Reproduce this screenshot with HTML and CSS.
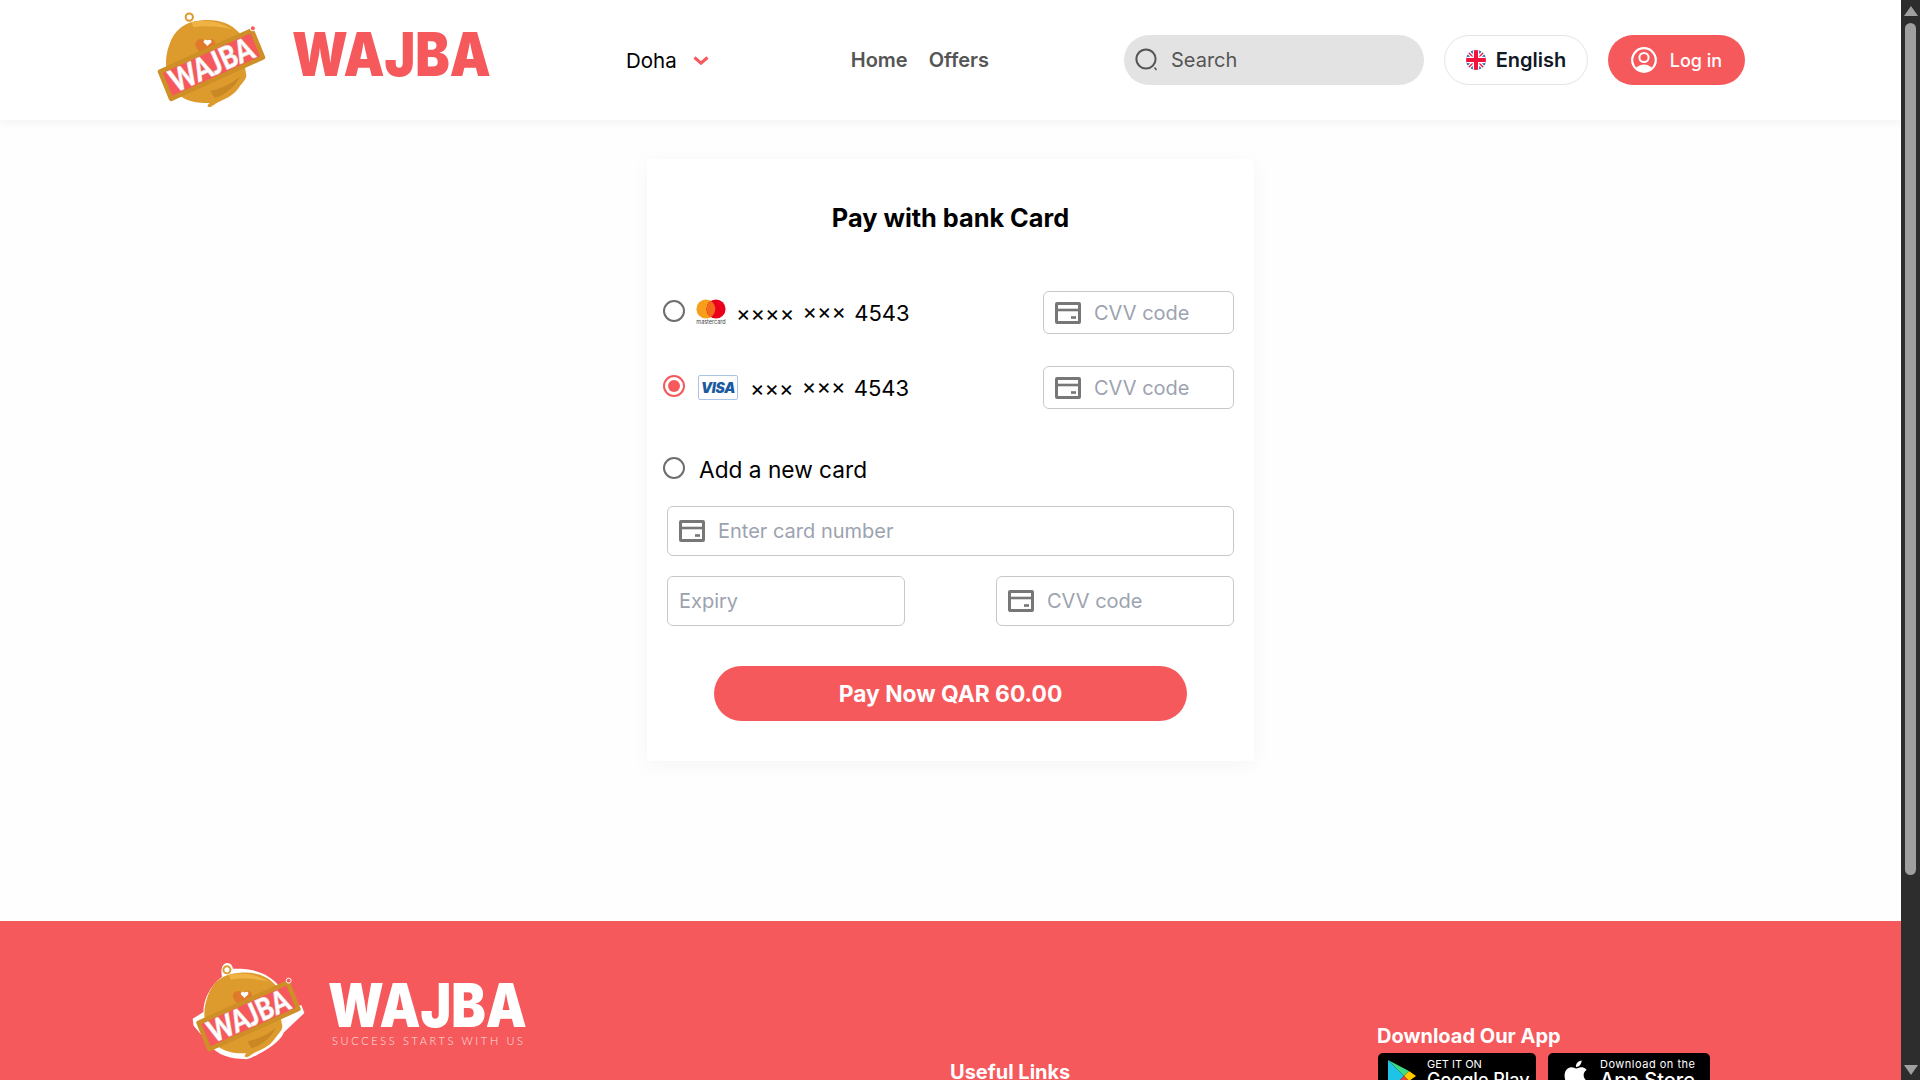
FILE: index.html
```html
<!DOCTYPE html>
<html lang="en">

<head>
    <meta charset="UTF-8">
    <meta name="viewport" content="width=device-width, initial-scale=1.0">
    <title>Wajba - Pay with bank Card</title>
    <link rel="stylesheet" href="styles.css">
</head>

<body>
    <svg class="defs" width="0" height="0">
        <symbol id="card_icon" viewBox="0 0 26 22">
            <rect x="1.5" y="1.5" width="23" height="19" rx="0.5" fill="none" stroke="#777" stroke-width="3" />
            <path d="M1 8h24" stroke="#777" stroke-width="2.6" />
            <path d="M16 15.5h5" stroke="#777" stroke-width="2.6" />
        </symbol>
        <symbol id="logo_mark" viewBox="0 0 108 95">
            <circle cx="32" cy="5" r="3.6" fill="none" stroke="#dd9a2d" stroke-width="2" />
            <path d="M12 33C17 17 28 9 45 8c15-1 27 2 37 13 3 3 4 6 1 7L88 60c2 6-2 8-7 15-4 6-10 10-20 14-4 2-8 6-10 5-2-1 0-3 1-4-14 1-28-3-34-12L10 60C8 50 9 42 12 33Z" fill="#dd9a2d" />
            <path d="M34 10C47 7 62 9 74 17 62 14 48 13 36 15Z" fill="#eeb245" />
            <path d="M53 78C63 76 72 72 82 64 78 73 68 82 57 85Z" fill="#c98824" />
            <path d="M38 31c2-6 8-5 10-2 3-4 10-3 10 3 0 5-6 8-10 12-4-3-10-7-10-13Z" fill="#e07a2a" />
            <path d="M46 29c1-2 3-2 4-1 1-1 4-1 4 1 0 2-3 3-4 5-1-2-4-3-4-5Z" fill="#fff" />
            <path d="M3 59 94 18 105 45 14 86Z" fill="#f6595c" stroke="#cf8f27" stroke-width="4.5" stroke-linejoin="round" />
            <circle cx="95" cy="16" r="2.5" fill="#f6595c" stroke="#fff" stroke-width="1" />
            <text x="54" y="63" transform="rotate(-24 54 52)" text-anchor="middle" textLength="88" lengthAdjust="spacingAndGlyphs" class="logo_word">WAJBA</text>
        </symbol>
    </svg>

    <div class="page">
        <div class="content">
            <header class="topbar">
                <a class="brand">
                    <svg class="brand_mark" viewBox="0 0 108 95"><use href="#logo_mark" /></svg>
                    <span class="brand_name">WAJBA</span>
                </a>
                <div class="city">
                    <span>Doha</span>
                    <svg width="16" height="9" viewBox="0 0 16 9">
                        <path d="M1.5 1.5 8 7.2l6.5-5.7" fill="none" stroke="#f6595c" stroke-width="3" />
                    </svg>
                </div>
                <nav class="nav">
                    <a>Home</a>
                    <a>Offers</a>
                </nav>
                <div class="search">
                    <svg width="24" height="24" viewBox="0 0 24 24">
                        <circle cx="11" cy="11" r="9.6" fill="none" stroke="#555" stroke-width="2" />
                        <path d="M19.5 19.5 21.5 22" stroke="#555" stroke-width="1.5" />
                    </svg>
                    <input type="text" placeholder="Search">
                </div>
                <div class="lang">
                    <svg width="20" height="20" viewBox="0 0 20 20">
                        <clipPath id="flag_clip"><circle cx="10" cy="10" r="10" /></clipPath>
                        <g clip-path="url(#flag_clip)">
                            <rect width="20" height="20" fill="#1f4fa3" />
                            <path d="M0 0 20 20M20 0 0 20" stroke="#fff" stroke-width="4" />
                            <path d="M0 0 20 20M20 0 0 20" stroke="#f0123f" stroke-width="1.4" />
                            <path d="M10 0v20M0 10h20" stroke="#fff" stroke-width="6.5" />
                            <path d="M10 0v20M0 10h20" stroke="#f0123f" stroke-width="4" />
                        </g>
                    </svg>
                    <span>English</span>
                </div>
                <a class="login">
                    <svg width="26" height="26" viewBox="0 0 26 26">
                        <clipPath id="user_clip"><circle cx="13" cy="13" r="11.6" /></clipPath>
                        <circle cx="13" cy="13" r="11.8" fill="none" stroke="#fff" stroke-width="2.2" />
                        <circle cx="13" cy="10.5" r="4.6" fill="none" stroke="#fff" stroke-width="2" />
                        <ellipse cx="13" cy="24" rx="9" ry="6.5" fill="#fff" clip-path="url(#user_clip)" />
                    </svg>
                    <span>Log in</span>
                </a>
            </header>

            <main class="card">
                <h1 class="card_title">Pay with bank Card</h1>

                <div class="saved_row">
                    <input type="radio" name="pay_card" class="radio">
                    <div class="mc_logo">
                        <svg width="30" height="20" viewBox="0 0 30 20">
                            <circle cx="10" cy="10" r="9.6" fill="#f79e1b" />
                            <circle cx="20" cy="10" r="9.6" fill="#eb001b" />
                            <path d="M15 2a9.6 9.6 0 0 1 0 16 9.6 9.6 0 0 1 0-16Z" fill="#f26a1b" />
                        </svg>
                        <span>mastercard</span>
                    </div>
                    <span class="card_digits">×××× ××× 4543</span>
                    <label class="field field_small">
                        <svg class="card_svg"><use href="#card_icon" /></svg>
                        <input type="text" placeholder="CVV code">
                    </label>
                </div>

                <div class="saved_row">
                    <input type="radio" name="pay_card" class="radio" checked>
                    <div class="visa_logo"><span>VISA</span></div>
                    <span class="card_digits">××× ××× 4543</span>
                    <label class="field field_small">
                        <svg class="card_svg"><use href="#card_icon" /></svg>
                        <input type="text" placeholder="CVV code">
                    </label>
                </div>

                <div class="new_row">
                    <input type="radio" name="pay_card" class="radio">
                    <span>Add a new card</span>
                </div>

                <label class="field">
                    <svg class="card_svg"><use href="#card_icon" /></svg>
                    <input type="text" placeholder="Enter card number">
                </label>
                <div class="field_pair">
                    <label class="field">
                        <input type="text" placeholder="Expiry">
                    </label>
                    <label class="field">
                        <svg class="card_svg"><use href="#card_icon" /></svg>
                        <input type="text" placeholder="CVV code">
                    </label>
                </div>

                <button class="pay_btn">Pay Now QAR 60.00</button>
            </main>

            <footer class="footer">
                <div class="foot_brand">
                    <svg class="foot_mark" viewBox="-3 -3 114 101">
                        <path d="M32 -2c4 0 6 3 6 6 12 0 30 0 44 14 4 4 6 8 4 12l3 13 19-2 3 8-21 20c-2 6-10 14-26 22-6 3-10 6-14 5-14 0-28-4-35-14L-2 62-3 55 8 48C8 36 14 22 27 12c-2-8 1-14 5-14Z" fill="#fff" />
                        <use href="#logo_mark" width="108" height="95" />
                    </svg>
                    <div class="foot_word">
                        <span class="brand_name foot_name">WAJBA</span>
                        <span class="tagline">SUCCESS STARTS WITH US</span>
                    </div>
                </div>
                <div class="foot_links">
                    <h3>Useful Links</h3>
                </div>
                <div class="foot_app">
                    <h3>Download Our App</h3>
                    <div class="badges">
                        <div class="badge badge_play">
                            <svg class="play_icon" width="28" height="32" viewBox="0 0 28 32">
                                <path d="M0 0 16 16 0 32Z" fill="#1fc3e8" />
                                <path d="M0 0 21 11 16 16Z" fill="#3ddc84" />
                                <path d="M21 11 28 16 21 21 16 16Z" fill="#ffc900" />
                                <path d="M0 32 16 16 21 21Z" fill="#ea4335" />
                            </svg>
                            <div class="badge_text">
                                <small>GET IT ON</small>
                                <strong class="play_name">Google Play</strong>
                            </div>
                        </div>
                        <div class="badge badge_apple">
                            <svg width="28" height="33" viewBox="0 0 24 24" fill="#fff">
                                <path d="M12.152 6.896c-.948 0-2.415-1.078-3.96-1.04-2.04.027-3.91 1.183-4.961 3.014-2.117 3.675-.546 9.103 1.519 12.09 1.013 1.454 2.208 3.09 3.792 3.039 1.52-.065 2.09-.987 3.935-.987 1.831 0 2.35.987 3.96.948 1.637-.026 2.676-1.48 3.676-2.948 1.156-1.688 1.636-3.325 1.662-3.415-.039-.013-3.182-1.221-3.22-4.857-.026-3.04 2.48-4.494 2.597-4.559-1.429-2.09-3.623-2.324-4.39-2.376-2-.156-3.675 1.09-4.61 1.09zM15.53 3.83c.843-1.012 1.4-2.427 1.245-3.83-1.207.052-2.662.805-3.532 1.818-.78.896-1.454 2.338-1.273 3.714 1.338.104 2.715-.688 3.559-1.701" />
                            </svg>
                            <div class="badge_text">
                                <small class="spaced">Download on the</small>
                                <strong>App Store</strong>
                            </div>
                        </div>
                    </div>
                </div>
            </footer>
        </div>

        <div class="scrollbar">
            <div class="arrow_up"></div>
            <div class="thumb"></div>
            <div class="arrow_down"></div>
        </div>
    </div>
</body>

</html>
```

FILE: styles.css
```css
html,
body {
    margin: 0;
    height: 1080px;
    overflow: hidden;
}

body {
    background-color: #fefefe;
    color: #000;
    font-family: "Inter", "Liberation Sans", sans-serif;
}

.defs {
    display: none;
}

.page {
    display: flex;
    height: 1080px;
}

.content {
    flex: 1;
    min-width: 0;
    overflow: hidden;
}

/* top bar */
.topbar {
    display: flex;
    align-items: center;
    height: 120px;
    padding: 0 156px 0 157px;
    background-color: #fff;
    box-shadow: 0 2px 10px rgba(0, 0, 0, 0.05);
    position: relative;
}

.brand {
    display: flex;
    align-items: center;
}

.brand_mark {
    width: 109px;
    height: 96px;
}

.brand_name {
    display: block;
    margin: 0 1px 12px 26px;
    width: 197px;
    color: #f6595c;
    font-size: 60px;
    line-height: 46px;
    font-weight: 900;
    white-space: nowrap;
    transform: scaleX(0.86);
    transform-origin: left center;
}

.logo_word {
    font-family: "Lato", sans-serif;
    font-size: 31px;
    font-weight: 900;
    fill: #fff;
    stroke: #e6e6e6;
    stroke-width: 0.6px;
}

.city {
    display: flex;
    align-items: center;
    gap: 16px;
    margin-left: 136px;
    font-size: 20.5px;
    font-weight: 400;
}

.nav {
    display: flex;
    gap: 21px;
    margin-left: 142px;
    color: #555;
    font-size: 20px;
    font-weight: 600;
}

.search {
    display: flex;
    align-items: center;
    gap: 10px;
    width: 300px;
    height: 50px;
    margin-left: auto;
    padding-left: 11px;
    box-sizing: border-box;
    background-color: #e3e3e3;
    border-radius: 25px;
}

.search input {
    width: 220px;
    border: 0;
    outline: 0;
    background: transparent;
    font: 400 20px "Inter", sans-serif;
}

.search input::placeholder {
    color: #555;
    opacity: 1;
}

.lang {
    display: flex;
    align-items: center;
    justify-content: center;
    gap: 10px;
    width: 144px;
    height: 50px;
    margin-left: 20px;
    box-sizing: border-box;
    border: 1px solid #e5e5e5;
    border-radius: 25px;
    color: #111827;
    font-size: 20px;
    font-weight: 600;
}

.login {
    display: flex;
    align-items: center;
    justify-content: center;
    gap: 13px;
    width: 137px;
    height: 50px;
    margin-left: 20px;
    background-color: #f6595c;
    border-radius: 25px;
    color: #fff;
    font-size: 18px;
    font-weight: 500;
}

/* payment card */
.card {
    width: 607px;
    height: 602px;
    margin: 39px auto 0;
    padding: 40px 20px;
    box-sizing: border-box;
    background-color: #fff;
    box-shadow: 0 4px 20px rgba(0, 0, 0, 0.04);
}

.card_title {
    margin: 0 0 54px;
    font-size: 25.3px;
    line-height: 38px;
    font-weight: 700;
    text-align: center;
}

.saved_row {
    display: flex;
    align-items: center;
    height: 43px;
    margin-bottom: 32px;
}

.radio {
    appearance: none;
    flex: none;
    width: 22px;
    height: 22px;
    margin: 0 0 4px -4px;
    padding: 3px;
    box-sizing: border-box;
    border: 2px solid #6e6e6e;
    border-radius: 50%;
    background-clip: content-box;
}

.radio:checked {
    border-color: #f6595c;
    background-color: #f6595c;
}

.mc_logo {
    display: flex;
    flex-direction: column;
    align-items: center;
    width: 30px;
    margin: 0 10px 0 11px;
    color: #444;
    font-size: 5.5px;
    line-height: 7px;
}

.visa_logo {
    display: flex;
    align-items: center;
    justify-content: center;
    width: 40px;
    height: 25px;
    margin: 0 12px 0 13px;
    box-sizing: border-box;
    border: 1px solid #a9c4e4;
    border-radius: 2px;
    color: #1a5a9e;
    font-size: 14px;
    font-style: italic;
    font-weight: 900;
    letter-spacing: -0.3px;
}

.card_digits {
    font-size: 22px;
    word-spacing: 2px;
}

.field {
    display: flex;
    align-items: center;
    gap: 13px;
    height: 50px;
    padding: 0 11px;
    box-sizing: border-box;
    border: 1px solid #c8c8c8;
    border-radius: 6px;
    background-color: #fff;
}

.field_small {
    width: 191px;
    height: 43px;
    margin-left: auto;
}

.field input {
    flex: 1;
    min-width: 0;
    border: 0;
    outline: 0;
    padding: 0;
    background: transparent;
    font: 400 20px "Inter", sans-serif;
}

.field input::placeholder {
    color: #9ca3af;
    opacity: 1;
}

.card_svg {
    flex: none;
    width: 26px;
    height: 22px;
}

.new_row {
    display: flex;
    align-items: center;
    gap: 14px;
    height: 34px;
    margin: 43px 0 20px;
    font-size: 22.7px;
}

.new_row .radio {
    margin-bottom: 2px;
}

.field_pair {
    display: grid;
    grid-template-columns: 238px 238px;
    justify-content: space-between;
    margin: 20px 0 40px;
}

.pay_btn {
    display: block;
    width: 473px;
    height: 55px;
    margin: 0 auto;
    border: 0;
    border-radius: 28px;
    background-color: #f6595c;
    color: #fff;
    font: 700 22.8px "Inter", sans-serif;
}

/* footer, cut off by the window */
.footer {
    display: flex;
    align-items: flex-start;
    height: 159px;
    margin-top: 160px;
    padding: 41px 0 0 192px;
    box-sizing: border-box;
    overflow: hidden;
    background-color: #f6595c;
    color: #fff;
}

.foot_brand {
    display: flex;
    align-items: flex-start;
    width: 758px;
}

.foot_mark {
    width: 113px;
    height: 99px;
}

.foot_word {
    display: flex;
    flex-direction: column;
    margin: 20px 0 0 23px;
}

.foot_name {
    margin: 0;
    color: #fff;
}

.tagline {
    margin: 6px 0 0 4px;
    color: #fde3e3;
    font-family: "Lato", sans-serif;
    font-size: 11px;
    font-weight: 300;
    letter-spacing: 2.65px;
    white-space: nowrap;
}

.foot_links {
    width: 427px;
    margin-top: 98px;
}

.foot_links h3,
.foot_app h3 {
    margin: 0;
    font-size: 20px;
    line-height: 24px;
    font-weight: 700;
}

.foot_app {
    margin-top: 62px;
}

.badges {
    display: flex;
    gap: 12px;
    margin: 5px 0 0 1px;
}

.badge {
    display: flex;
    align-items: flex-start;
    gap: 10px;
    height: 60px;
    padding: 5px 0 0 10px;
    box-sizing: border-box;
    background-color: #000;
    border-radius: 5px;
}

.badge_play {
    width: 158px;
    gap: 11px;
}

.play_icon {
    margin-top: 2px;
}

.badge_apple {
    width: 162px;
    padding-left: 14px;
}

.badge_text {
    display: flex;
    flex-direction: column;
}

.badge_text small {
    font-size: 11px;
    line-height: 12px;
}

.badge_text small.spaced {
    letter-spacing: 0.5px;
}

.badge_text strong {
    font-size: 20px;
    line-height: 20px;
    font-weight: 500;
    white-space: nowrap;
}

.badge_text strong.play_name {
    font-size: 18px;
}

/* window scrollbar from the screenshot */
.scrollbar {
    display: flex;
    flex-direction: column;
    align-items: center;
    flex: none;
    width: 19px;
    height: 1080px;
    padding: 6px 0 5px;
    box-sizing: border-box;
    background-color: #2d2d2d;
}

.arrow_up,
.arrow_down {
    width: 0;
    height: 0;
    border-left: 7px solid transparent;
    border-right: 7px solid transparent;
}

.arrow_up {
    border-bottom: 10px solid #a0a0a0;
}

.arrow_down {
    margin-top: auto;
    border-top: 10px solid #a0a0a0;
}

.thumb {
    width: 11px;
    height: 852px;
    margin-top: 7px;
    border-radius: 6px;
    background-color: #9f9f9f;
}
```
